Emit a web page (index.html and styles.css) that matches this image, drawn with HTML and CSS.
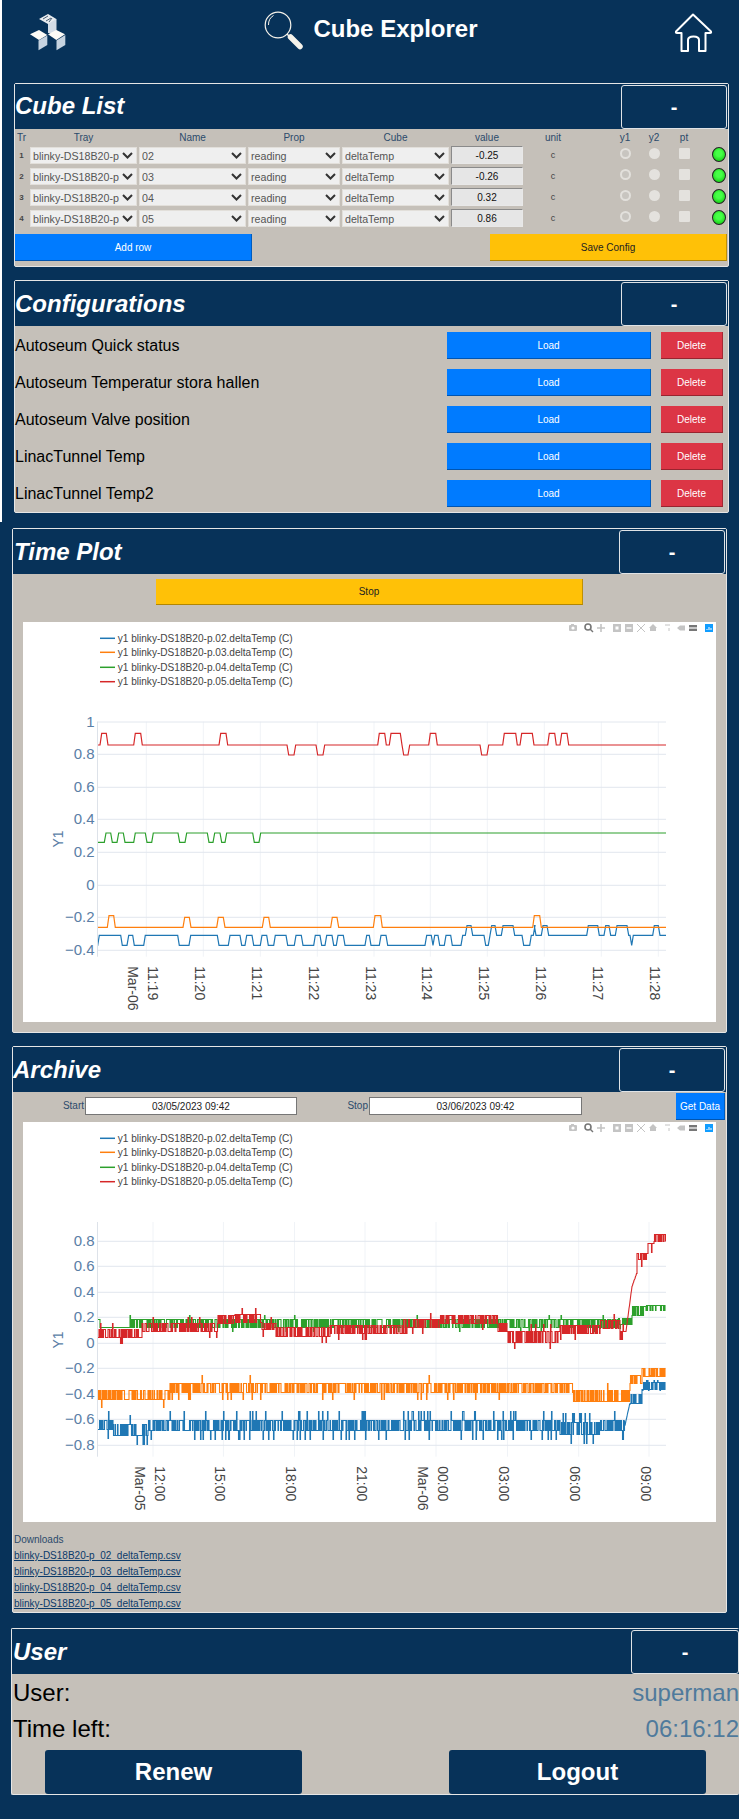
FILE: index.html
```html
<!doctype html>
<html>
<head>
	<title>Cube Explorer</title>
	<meta charset="utf-8" />
	<link rel="stylesheet" href="styles.css">
</head>
<body>
	<div class="upper">
		<header class="top-bar">
			<svg class="logo" viewBox="31 14 36 37" width="36" height="37">
				<polygon points="49,19 57.5,19 57.5,33 49,33" fill="#d3dce6"/>
				<polygon points="40,19 49,14 57.3,19 49,24" fill="#e8ecef"/>
				<path d="M44 19l5-3M47 21l5-3M50 22l3-4" stroke="#4a5f75" stroke-width="1" fill="none"/>
				<polygon points="31,34.3 40,30 48.3,35 40,40" fill="#fdfbf6"/>
				<polygon points="39.5,40.5 48.3,35.5 48.3,45 39.5,50.3" fill="#c6d3e0"/>
				<polygon points="49,34.3 57.3,30 66,34.3 57.3,40" fill="#fdfbf6"/>
				<polygon points="57.5,40.5 66.3,35 66.3,45 57.5,50.3" fill="#c6d3e0"/>
			</svg>
			<div class="page-title">
				<svg viewBox="264 11 40 40" width="40" height="40">
					<circle cx="278" cy="25" r="12.8" fill="none" stroke="#f5f2ea" stroke-width="1.2"/>
					<path d="M268.5 25a9.5 10.5 0 0 1 5-9.5" fill="none" stroke="#f5f2ea" stroke-width="1"/>
					<path d="M287 34l3 3" stroke="#f5f2ea" stroke-width="1.5"/>
					<path d="M290.5 37l9.5 9.5" stroke="#f5f2ea" stroke-width="5.5" stroke-linecap="round"/>
				</svg>
				<h1>Cube Explorer</h1>
			</div>
			<svg class="home" viewBox="674 13 39 40" width="39" height="40">
				<path d="M693 14.5L676 31.5Q675.5 33 677 33H681.5V51H688V40Q688 36.5 693.5 36.5Q699 36.5 699 40V51H705.5V33H710Q711.5 33 711 31.5Z" fill="none" stroke="#fff" stroke-width="2" stroke-linejoin="round"/>
			</svg>
		</header>

		<section class="panel cube-panel">
			<div class="panel-head">
				<h2>Cube List</h2>
				<button class="collapse">-</button>
			</div>
			<div class="cube-list">
				<div class="cube-row cube-labels">
					<span>Tr</span><span>Tray</span><span>Name</span><span>Prop</span><span>Cube</span><span>value</span><span>unit</span><span></span><span>y1</span><span>y2</span><span>pt</span><span></span>
				</div>
				<div class="cube-row">
					<span class="num">1</span>
					<select><option>blinky-DS18B20-p</option></select>
					<select><option>02</option></select>
					<select><option>reading</option></select>
					<select><option>deltaTemp</option></select>
					<input class="value" value="-0.25" disabled>
					<span class="unit">c</span><span></span>
					<input class="ring" type="radio" disabled>
					<input class="dot" type="radio" disabled>
					<input class="box" type="checkbox" disabled>
					<span class="led"></span>
				</div>
				<div class="cube-row">
					<span class="num">2</span>
					<select><option>blinky-DS18B20-p</option></select>
					<select><option>03</option></select>
					<select><option>reading</option></select>
					<select><option>deltaTemp</option></select>
					<input class="value" value="-0.26" disabled>
					<span class="unit">c</span><span></span>
					<input class="ring" type="radio" disabled>
					<input class="dot" type="radio" disabled>
					<input class="box" type="checkbox" disabled>
					<span class="led"></span>
				</div>
				<div class="cube-row">
					<span class="num">3</span>
					<select><option>blinky-DS18B20-p</option></select>
					<select><option>04</option></select>
					<select><option>reading</option></select>
					<select><option>deltaTemp</option></select>
					<input class="value" value="0.32" disabled>
					<span class="unit">c</span><span></span>
					<input class="ring" type="radio" disabled>
					<input class="dot" type="radio" disabled>
					<input class="box" type="checkbox" disabled>
					<span class="led"></span>
				</div>
				<div class="cube-row">
					<span class="num">4</span>
					<select><option>blinky-DS18B20-p</option></select>
					<select><option>05</option></select>
					<select><option>reading</option></select>
					<select><option>deltaTemp</option></select>
					<input class="value" value="0.86" disabled>
					<span class="unit">c</span><span></span>
					<input class="ring" type="radio" disabled>
					<input class="dot" type="radio" disabled>
					<input class="box" type="checkbox" disabled>
					<span class="led"></span>
				</div>
				<div class="cube-actions">
					<button class="btn blue">Add row</button>
					<button class="btn yellow">Save Config</button>
				</div>
			</div>
		</section>

		<section class="panel config-panel">
			<div class="panel-head">
				<h2>Configurations</h2>
				<button class="collapse">-</button>
			</div>
			<div class="config-list">
				<div class="config-row">
					<span>Autoseum Quick status</span>
					<button class="btn blue load">Load</button>
					<button class="btn red delete">Delete</button>
				</div>
				<div class="config-row">
					<span>Autoseum Temperatur stora hallen</span>
					<button class="btn blue load">Load</button>
					<button class="btn red delete">Delete</button>
				</div>
				<div class="config-row">
					<span>Autoseum Valve position</span>
					<button class="btn blue load">Load</button>
					<button class="btn red delete">Delete</button>
				</div>
				<div class="config-row">
					<span>LinacTunnel Temp</span>
					<button class="btn blue load">Load</button>
					<button class="btn red delete">Delete</button>
				</div>
				<div class="config-row">
					<span>LinacTunnel Temp2</span>
					<button class="btn blue load">Load</button>
					<button class="btn red delete">Delete</button>
				</div>
			</div>
		</section>
	</div>

	<section class="panel time-panel">
		<div class="panel-head">
			<h2>Time Plot</h2>
			<button class="collapse">-</button>
		</div>
		<div class="time-body">
			<button class="btn yellow stop">Stop</button>
			<div class="plot" id="time-plot"></div>
		</div>
	</section>

	<section class="panel archive-panel">
		<div class="panel-head">
			<h2>Archive</h2>
			<button class="collapse">-</button>
		</div>
		<div class="archive-range">
			<label>Start</label>
			<input class="date" value="03/05/2023 09:42">
			<label>Stop</label>
			<input class="date" value="03/06/2023 09:42">
			<span></span>
			<button class="btn blue get-data">Get Data</button>
		</div>
		<div class="plot" id="archive-plot"></div>
		<div class="downloads">
			<div>Downloads</div>
			<div><a href="#">blinky-DS18B20-p_02_deltaTemp.csv</a></div>
			<div><a href="#">blinky-DS18B20-p_03_deltaTemp.csv</a></div>
			<div><a href="#">blinky-DS18B20-p_04_deltaTemp.csv</a></div>
			<div><a href="#">blinky-DS18B20-p_05_deltaTemp.csv</a></div>
		</div>
	</section>

	<section class="panel user-panel">
		<div class="panel-head">
			<h2>User</h2>
			<button class="collapse">-</button>
		</div>
		<div class="user-row"><span>User:</span><span class="user-value">superman</span></div>
		<div class="user-row"><span>Time left:</span><span class="user-value">06:16:12</span></div>
		<div class="user-actions">
			<button class="btn-big">Renew</button>
			<button class="btn-big">Logout</button>
		</div>
	</section>

	<script src="plot.js"></script>
</body>
</html>
```
FILE: styles.css
```css
html {
	background-color: #073259;
}

body {
	margin: 0px;
	padding-bottom: 24px;
	background-color: #073259;
	font-family: "Liberation Sans", Arial, sans-serif;
	color: #000;
}

.upper {
	border-left: 2px solid #fff;
	padding-bottom: 9px;
}

.top-bar {
	height: 83px;
	padding: 0 26px 0 28px;
	display: flex;
	justify-content: space-between;
}

.logo {
	margin-top: 14px;
}

.home {
	margin-top: 13px;
}

.page-title {
	display: flex;
	align-items: flex-start;
	margin-left: 2px;
	padding-top: 11px;
}

.page-title h1 {
	margin: 1px 0 0 9px;
	color: #fff;
	font-size: 24px;
	line-height: 34px;
	font-weight: bold;
}

.panel {
	width: 713px;
	margin-left: 12px;
	border: 1px solid #e6e6e6;
	border-radius: 2px;
	background-color: #c5c0b9;
}

.panel-head {
	height: 45px;
	display: flex;
	justify-content: space-between;
	background-color: #073259;
}

.panel-head h2 {
	margin: 0;
	color: #fff;
	font-size: 24px;
	font-style: italic;
	font-weight: bold;
	line-height: 45px;
}

.cube-panel .panel-head h2 {
	line-height: 44px;
}

.collapse {
	width: 106px;
	height: 44px;
	margin: 1px 1px 0 0;
	border: 1px solid #dfe3e6;
	border-radius: 3px;
	background-color: #073259;
	color: #fff;
	font-family: inherit;
	font-size: 20px;
	font-weight: bold;
}

.cube-list {
	padding: 1px 0 5px 0;
}

.cube-row {
	display: grid;
	grid-template-columns: 13px 107px 107px 92px 107px 72px 56px 26px 28px 26px 30px 26px;
	column-gap: 2px;
	height: 18px;
	margin-bottom: 3px;
	align-items: center;
	justify-items: center;
	font-size: 10px;
}

.cube-row:last-of-type {
	margin-bottom: 0;
}

.cube-row select {
	appearance: none;
	width: 100%;
	height: 17px;
	margin-top: 1px;
	padding: 0 0 0 2px;
	border: 1px solid #e2dfda;
	border-radius: 0;
	background-color: #efefef;
	background-image: url("data:image/svg+xml,%3Csvg xmlns='http://www.w3.org/2000/svg' width='11' height='7'%3E%3Cpath d='M1 1l4.5 4.5L10 1' fill='none' stroke='%23333' stroke-width='2'/%3E%3C/svg%3E");
	background-repeat: no-repeat;
	background-position: right 3px center;
	color: #555;
	font-family: inherit;
	font-size: 10.67px;
}

.cube-labels {
	height: 13px;
	padding-top: 1px;
	margin-bottom: 2px;
	color: #2b4a6b;
}

.num {
	font-size: 8px;
	font-weight: bold;
	color: #444;
}

.value {
	box-sizing: border-box;
	width: 100%;
	height: 18px;
	padding: 0;
	border: 1px solid #e8e8e8;
	border-top-color: #8a8a8a;
	border-left-color: #8a8a8a;
	background-color: #e6e6e6;
	color: #111;
	font-family: inherit;
	font-size: 10px;
	text-align: center;
	opacity: 1;
}

.unit {
	color: #444;
	font-size: 9px;
}

.ring, .dot, .box {
	appearance: none;
	margin: 0 0 4px 0;
}

.ring, .dot {
	box-sizing: border-box;
	width: 11px;
	height: 11px;
	border-radius: 50%;
}

.ring {
	border: 2px solid #e2e0dc;
	background-color: #c8c5c0;
}

.dot {
	background-color: #e4e2de;
}

.box {
	width: 11px;
	height: 11px;
	border-radius: 1px;
	background-color: #e4e2de;
}

.led {
	box-sizing: border-box;
	width: 14px;
	height: 15px;
	margin: 0 0 2px 10px;
	border: 1px solid #222;
	border-radius: 50%;
	background: radial-gradient(circle at 50% 42%, #46ff46 30%, #10c410 90%);
}

.btn {
	border: 0;
	border-right: 1px solid rgba(0, 0, 0, 0.25);
	border-bottom: 1px solid rgba(0, 0, 0, 0.3);
	font-family: inherit;
	font-size: 10px;
	padding: 0;
}

.blue {
	background-color: #007bff;
	color: #fff;
}

.yellow {
	background-color: #ffc107;
	color: #222;
}

.red {
	background-color: #dc3545;
	color: #fff;
}

.cube-actions {
	display: flex;
	justify-content: space-between;
	margin-top: 7px;
	padding-right: 1px;
}

.cube-actions .btn {
	width: 237px;
	height: 27px;
}

.config-panel {
	margin-top: 13px;
}

.config-list {
	padding: 6px 5px 5px 0;
}

.config-row {
	display: flex;
	align-items: center;
	height: 27px;
	margin-bottom: 10px;
	font-size: 16px;
}

.config-row:last-child {
	margin-bottom: 0;
}

.config-row span {
	flex: 1;
}

.load {
	width: 204px;
	height: 27px;
	margin-right: 10px;
}

.delete {
	width: 62px;
	height: 27px;
}

.time-panel, .archive-panel {
	margin-left: 12px;
	padding-left: 2px;
	width: 711px;
}

.time-panel {
	margin-top: 6px;
}

.time-panel .panel-head, .archive-panel .panel-head {
	margin-left: -2px;
}

.time-panel h2 {
	padding-left: 1px;
}

.time-body {
	padding: 5px 0 10px 0;
}

.stop {
	display: block;
	width: 427px;
	height: 26px;
	margin: 0 0 17px 141px;
}

.plot {
	width: 693px;
	height: 400px;
	margin-left: 8px;
	background-color: #fff;
}

.plot svg {
	display: block;
}

.archive-panel {
	margin-top: 13px;
}

.archive-range {
	display: grid;
	grid-template-columns: 70px 212px 72px 213px 94px 49px;
	height: 30px;
	align-items: start;
	font-size: 10px;
	color: #2b4a6b;
}

.archive-range label {
	margin-top: 5px;
	line-height: 18px;
	text-align: right;
	padding-right: 1px;
}

.date {
	box-sizing: border-box;
	width: 100%;
	height: 18px;
	margin-top: 5px;
	padding: 0;
	border: 1px solid #767676;
	background-color: #fff;
	color: #222;
	font-family: inherit;
	font-size: 10px;
	text-align: center;
}

.get-data {
	height: 27px;
	margin-top: 1px;
}

.downloads {
	margin-left: -1px;
	padding-top: 10px;
	height: 80px;
	font-size: 10px;
	line-height: 16px;
	color: #2b4a6b;
}

.downloads a {
	color: #0a3a6a;
}

.user-panel {
	margin-top: 15px;
	margin-left: 11px;
	width: 727px;
	border-right: 0;
}

.user-panel .panel-head {
	margin-bottom: 1px;
}

.user-panel .collapse {
	width: 108px;
	margin-right: 0;
}

.user-panel h2 {
	padding-left: 1px;
}

.user-row {
	display: flex;
	justify-content: space-between;
	height: 36px;
	padding-left: 1px;
	font-size: 24px;
	line-height: 36px;
}

.user-value {
	color: #4f7a9c;
}

.user-actions {
	display: flex;
	gap: 147px;
	padding: 3px 0 0 33px;
}

.btn-big {
	width: 257px;
	height: 44px;
	border: 0;
	border-radius: 3px;
	background-color: #073259;
	color: #fff;
	font-family: inherit;
	font-size: 24px;
	font-weight: bold;
}
```
FILE: plot.js
```js
const COLORS = ['#1f77b4', '#ff7f0e', '#2ca02c', '#d62728'];
const NS = 'blinky-DS18B20-p.';

// small seeded generator so the archive noise is the same on every load
let seed = 20230306;
function rnd() {
	seed = (seed * 1664525 + 1013904223) % 4294967296;
	return seed / 4294967296;
}

// base line with bumps, all in 3x crop coordinates of the time plot
function steps(base, events) {
	const ramp = 5;
	let pts = [[285, base]];
	events.forEach(([a, b, y]) => {
		pts.push([a, base], [a + ramp, y], [b - ramp, y], [b, base]);
	});
	pts.push([1998, base]);
	return pts.map(([x, y]) => [x / 3, y / 3 + 600]);
}

const L = 1036, H = 977;
const timeTraces = [
	steps(1006, [[280, 298, L], [362, 386, L], [398, 436, L], [533, 572, L], [652, 690, L], [720, 740, L], [756, 786, L],
		[800, 826, L], [858, 888, L], [904, 946, L], [960, 980, L], [996, 1014, L], [1030, 1100, L], [1108, 1143, L],
		[1158, 1280, L], [1294, 1304, L], [1314, 1338, L], [1352, 1388, L], [1396, 1418, H], [1452, 1470, L], [1470, 1490, H],
		[1504, 1544, H], [1566, 1594, L], [1600, 1608, H], [1624, 1646, H], [1760, 1798, H], [1812, 1832, H], [1846, 1886, H],
		[1890, 1900, L], [1958, 1980, H]]),
	steps(982, [[322, 346, 947], [549, 573, 952], [650, 675, 952], [787, 811, 952], [992, 1016, 952], [1120, 1147, 947], [1598, 1624, 947]]),
	steps(699, [[280, 318, 727], [332, 356, 727], [370, 406, 727], [436, 460, 727], [534, 560, 727], [622, 644, 727], [660, 680, 727], [758, 782, 727]]),
	steps(435, [[300, 324, 400], [401, 427, 400], [657, 683, 400], [861, 887, 465], [948, 974, 465], [1133, 1159, 400], [1168, 1206, 400],
		[1206, 1229, 465], [1286, 1312, 400], [1440, 1466, 465], [1508, 1552, 400], [1560, 1602, 400], [1643, 1669, 400], [1680, 1706, 400]]),
];

// zones: x from, x to, high value, low value, chance of high (negative: a plain ramp)
// the trace holds a level and jumps, so most of it is drawn as upright strokes
function noise(zones, spike, toY) {
	let pts = [];
	let prev = null;
	zones.forEach(([x0, x1, hi, lo, p]) => {
		for (let x = x0; x < x1; x += 0.5) {
			let v;
			if (p < 0) {
				v = hi + (lo - hi) * (x - x0) / (x1 - x0);
			} else {
				let r = rnd();
				v = r < p ? hi : lo;
				let s = rnd();
				if (s < spike[0]) v = hi + spike[2];
				if (s > 1 - spike[1]) v = lo - spike[2];
			}
			let y = Math.round(toY(v)) + 0.5;
			if (prev !== null && p >= 0) pts.push([x, prev]);
			pts.push([x, y]);
			prev = y;
		}
	});
	return pts;
}

const archY = v => 1343.3 - 127.5 * v;
const archiveTraces = [
	noise([[98, 113, -0.6, -0.67, 0.5], [113, 148, -0.63, -0.72, 0.45], [148, 560, -0.6, -0.68, 0.5],
		[560, 600, -0.62, -0.71, 0.4], [600, 625, -0.6, -0.68, 0.5], [625, 630, -0.64, -0.46, -1],
		[630, 642, -0.47, -0.4, 0.5], [642, 666, -0.36, -0.3, 0.5]], [0.05, 0.06, 0.07], archY),
	noise([[98, 170, -0.37, -0.44, 0.45], [170, 573, -0.31, -0.38, 0.55], [573, 630, -0.37, -0.45, 0.4],
		[630, 642, -0.31, -0.25, 0.5], [642, 666, -0.26, -0.19, 0.5]], [0.004, 0.03, 0.06], archY),
	noise([[98, 100, 0.19, 0.13, 0.8], [100, 130, 0.125, 0.125, 1], [130, 142, 0.19, 0.13, 0.5], [142, 618, 0.19, 0.13, 0.55],
		[618, 632, 0.2, 0.15, 0.6], [632, 646, 0.29, 0.22, 0.6], [646, 666, 0.3, 0.26, 0.7]], [0.004, 0.01, 0.03], archY),
	noise([[98, 142, 0.11, 0.05, 0.4], [142, 218, 0.16, 0.1, 0.5], [218, 235, 0.22, 0.16, 0.6], [235, 262, 0.23, 0.17, 0.6],
		[262, 276, 0.16, 0.11, 0.5], [276, 330, 0.13, 0.06, 0.45], [330, 407, 0.14, 0.08, 0.55], [407, 440, 0.19, 0.13, 0.6],
		[440, 498, 0.22, 0.16, 0.4], [498, 508, 0.16, 0.1, 0.5], [508, 560, 0.1, 0.01, 0.45], [560, 600, 0.14, 0.08, 0.5],
		[600, 620, 0.18, 0.12, 0.55], [620, 626, 0.1, 0.03, 0.5], [626, 632, 0.1, 0.45, -1], [632, 637, 0.45, 0.56, -1],
		[637, 648, 0.71, 0.66, 0.7], [648, 654, 0.79, 0.72, 0.7], [654, 666, 0.86, 0.8, 0.7]], [0.01, 0.02, 0.05], archY),
];

function line(pts, color, width) {
	const d = pts.map(p => p[0].toFixed(1) + ',' + p[1].toFixed(1)).join(' ');
	return `<polyline points="${d}" fill="none" stroke="${color}" stroke-width="${width}"/>`;
}

function modebar(top) {
	const y = top + 6;
	const g = '#c4c4c4';
	return `<g fill="${g}">
		<rect x="569" y="${y - 3}" width="8" height="6" rx="1"/><circle cx="573" cy="${y}" r="1.6" fill="#fff"/><rect x="571" y="${y - 4}" width="3" height="1"/>
		<circle cx="588" cy="${y - 1}" r="3" fill="none" stroke="#777" stroke-width="1.6"/><path d="M590 ${y + 1}l3 3" stroke="#777" stroke-width="1.4"/>
		<path d="M601 ${y - 4}v8M597 ${y}h8" stroke="${g}" stroke-width="1.6"/>
		<rect x="613" y="${y - 4}" width="8" height="8"/><rect x="615.5" y="${y - 1.5}" width="3" height="3" fill="#fff"/>
		<rect x="625" y="${y - 4}" width="8" height="8"/><rect x="626.5" y="${y - 0.7}" width="5" height="1.4" fill="#fff"/>
		<path d="M637 ${y - 4}l8 8M645 ${y - 4}l-8 8" stroke="${g}" stroke-width="1"/>
		<path d="M649 ${y}l4-4 4 4h-1v3h-6v-3z"/>
		<path d="M665 ${y - 3}h3M669 ${y - 4}v2M669 ${y}v3" stroke="${g}" stroke-width="1"/>
		<path d="M677 ${y}l3-2.5h5v5h-5z"/>
		<rect x="689" y="${y - 3}" width="8" height="2.4" fill="#777"/><rect x="689" y="${y + 0.6}" width="8" height="2.4" fill="#777"/>
		<rect x="705" y="${y - 4}" width="8" height="8" fill="#119dff"/><path d="M707 ${y + 2}v-1M709 ${y + 2}v-3M711 ${y + 2}v-2" stroke="#fff" stroke-width="1"/>
	</g>`;
}

function drawPlot(id, o) {
	const plotTop = o.top;
	let s = `<svg xmlns="http://www.w3.org/2000/svg" width="693" height="400" viewBox="23 ${plotTop} 693 400">`;
	s += `<clipPath id="${id}-clip"><rect x="98" y="${o.y0}" width="568" height="${o.y1 - o.y0}"/></clipPath>`;

	o.xticks.forEach(t => {
		s += `<line x1="${t.x}" x2="${t.x}" y1="${o.y0}" y2="${o.y1}" stroke="#f0f3f7"/>`;
	});
	o.yticks.forEach(t => {
		s += `<line x1="97" x2="666" y1="${t.y}" y2="${t.y}" stroke="#e2e7ee"/>`;
		s += `<text x="94.5" y="${t.y + 5}" text-anchor="end" font-size="15" fill="#5a7ea6">${t.v}</text>`;
	});
	s += `<line x1="97.5" x2="97.5" y1="${o.y0}" y2="${o.y1}" stroke="#dde2e9"/>`;

	s += `<g clip-path="url(#${id}-clip)">`;
	o.traces.forEach((pts, i) => {
		s += line(pts, COLORS[i], o.width);
	});
	s += '</g>';

	o.xticks.forEach(t => {
		const base = t.sub ? t.x + 1.7 : t.x - 8.3;
		s += `<text x="${base}" y="${o.y1 + 9.5}" transform="rotate(90 ${base} ${o.y1 + 9.5})" font-size="14" fill="#444">${t.label}</text>`;
		if (t.sub) {
			const b2 = t.x - 18.5;
			s += `<text x="${b2}" y="${o.y1 + 9.5}" transform="rotate(90 ${b2} ${o.y1 + 9.5})" font-size="14" fill="#444">${t.sub}</text>`;
		}
	});
	s += `<text x="${o.titleY[0]}" y="${o.titleY[1]}" transform="rotate(-90 ${o.titleY[0]} ${o.titleY[1]})" text-anchor="middle" font-size="14" fill="#5a7ea6">Y1</text>`;

	['02', '03', '04', '05'].forEach((n, i) => {
		const y = plotTop + [16.3, 30.3, 45.3, 59.7][i];
		s += `<line x1="100" x2="115" y1="${y}" y2="${y}" stroke="${COLORS[i]}" stroke-width="1.5"/>`;
		s += `<text x="117.7" y="${y + 3.6}" font-size="10.1" fill="#444">y1 ${NS}${n}.deltaTemp (C)</text>`;
	});
	s += modebar(plotTop);
	s += '</svg>';
	document.getElementById(id).innerHTML = s;
}

drawPlot('time-plot', {
	top: 622, y0: 721.7, y1: 956.7, width: 1.2, traces: timeTraces, titleY: [63, 839],
	yticks: [[722, '1'], [754.3, '0.8'], [787.3, '0.6'], [819.3, '0.4'], [852.3, '0.2'], [885.3, '0'], [917.3, '\u22120.2'], [950.3, '\u22120.4']]
		.map(([y, v]) => ({ y, v })),
	xticks: [
		{ x: 146.3, label: '11:19', sub: 'Mar-06' }, { x: 203.3, label: '11:20' }, { x: 260.3, label: '11:21' },
		{ x: 317.3, label: '11:22' }, { x: 374, label: '11:23' }, { x: 430.3, label: '11:24' }, { x: 487.3, label: '11:25' },
		{ x: 544.3, label: '11:26' }, { x: 601.3, label: '11:27' }, { x: 658.3, label: '11:28' },
	],
});

drawPlot('archive-plot', {
	top: 1122, y0: 1222, y1: 1456.7, width: 1.1, traces: archiveTraces, titleY: [63, 1340],
	yticks: [[1241.3, '0.8'], [1266.3, '0.6'], [1292.3, '0.4'], [1317.3, '0.2'], [1343.3, '0'], [1368.3, '\u22120.2'], [1394, '\u22120.4'], [1419.3, '\u22120.6'], [1445.3, '\u22120.8']]
		.map(([y, v]) => ({ y, v })),
	xticks: [
		{ x: 153, label: '12:00', sub: 'Mar-05' }, { x: 223.4, label: '15:00' }, { x: 294.5, label: '18:00' }, { x: 365, label: '21:00' },
		{ x: 436, label: '00:00', sub: 'Mar-06' }, { x: 507.5, label: '03:00' }, { x: 578.7, label: '06:00' }, { x: 649, label: '09:00' },
	],
});
```
